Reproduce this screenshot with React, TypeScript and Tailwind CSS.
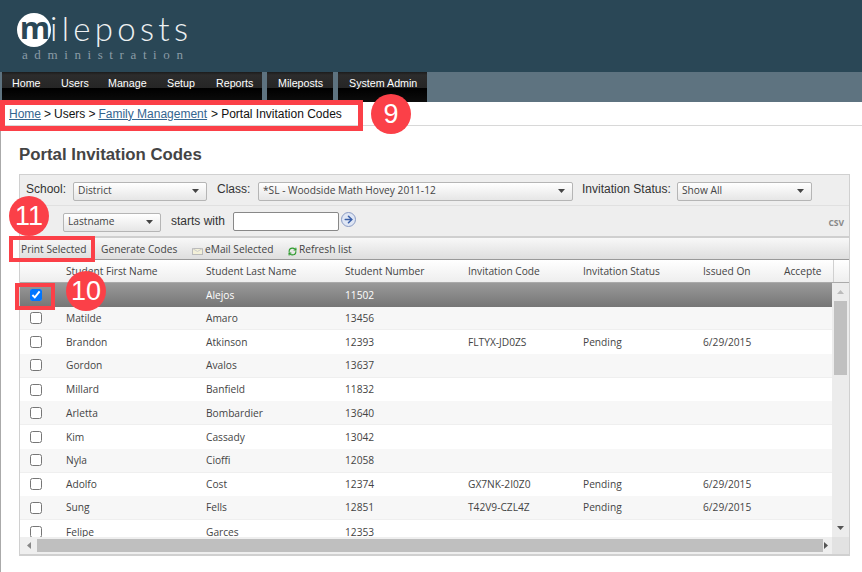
import React from 'react';
import { ArrowRight, RefreshCw } from 'lucide-react';

const students = [
  { first: '', last: 'Alejos', num: '11502', code: '', status: '', issued: '' },
  { first: 'Matilde', last: 'Amaro', num: '13456', code: '', status: '', issued: '' },
  { first: 'Brandon', last: 'Atkinson', num: '12393', code: 'FLTYX-JD0ZS', status: 'Pending', issued: '6/29/2015' },
  { first: 'Gordon', last: 'Avalos', num: '13637', code: '', status: '', issued: '' },
  { first: 'Millard', last: 'Banfield', num: '11832', code: '', status: '', issued: '' },
  { first: 'Arletta', last: 'Bombardier', num: '13640', code: '', status: '', issued: '' },
  { first: 'Kim', last: 'Cassady', num: '13042', code: '', status: '', issued: '' },
  { first: 'Nyla', last: 'Cioffi', num: '12058', code: '', status: '', issued: '' },
  { first: 'Adolfo', last: 'Cost', num: '12374', code: 'GX7NK-2I0Z0', status: 'Pending', issued: '6/29/2015' },
  { first: 'Sung', last: 'Fells', num: '12851', code: 'T42V9-CZL4Z', status: 'Pending', issued: '6/29/2015' },
  { first: 'Felipe', last: 'Garces', num: '12353', code: '', status: '', issued: '' },
];

const navBg = 'bg-[linear-gradient(#1c1c1c,#2c2c2c_10%,#262626_52%,#000_54%,#0c0c0c)]';

const Select: React.FC<{ label: string; className: string }> = ({ label, className }) => (
  <div className={`h-[19px] flex items-center justify-between pl-[4px] pr-[7px] border border-[#b5b5b5] rounded-[2px] bg-gradient-to-b from-white to-[#e6e6e6] text-[10.2px] text-[#444] font-['Open_Sans',sans-serif] ${className}`}>
    <span>{label}</span>
    <svg width="7" height="4" viewBox="0 0 7 4"><path d="M0 0h7L3.5 4z" fill="#444" /></svg>
  </div>
);

const Badge: React.FC<{ n: string; className: string }> = ({ n, className }) => (
  <div className={`absolute w-[40px] h-[40px] rounded-full bg-[#fb4048] text-white text-[27px] flex items-center justify-center ${className}`}>{n}</div>
);

export default function App() {
  return (
    <div className="relative w-[862px] h-[572px] overflow-hidden bg-white font-['Liberation_Sans',sans-serif]">
      <div className="h-[72px] bg-[#2a4756] relative">
        <div className="absolute left-[17px] top-[13px] w-[34px] h-[34px] rounded-full bg-white flex items-center justify-center">
          <span className="text-[#2a4756] text-[31px] font-bold leading-none font-['Open_Sans',sans-serif] mt-[-5px] ml-[2px]">m</span>
        </div>
        <div className="absolute left-[50px] top-[8px] text-[#eef1f2] text-[33px] leading-[40px] tracking-[4.3px] font-['Lato',sans-serif] font-light">ileposts</div>
        <div className="absolute left-[22px] top-[47px] text-[#8b9ca6] text-[13px] leading-[16px] tracking-[6.6px] font-['Liberation_Serif',serif]">administration</div>
      </div>

      <div className="h-[30px] bg-[#5e7380] flex gap-[5px] pl-[2px] text-white text-[10.7px] leading-[22px]">
        <div className={`flex items-start w-[260px] pl-[10px] ${navBg}`}>
          <span className="w-[49px]">Home</span>
          <span className="w-[47px]">Users</span>
          <span className="w-[59px]">Manage</span>
          <span className="w-[49px]">Setup</span>
          <span>Reports</span>
        </div>
        <div className={`w-[66px] pl-[11px] ${navBg}`}>Mileposts</div>
        <div className={`w-[89px] pl-[11px] ${navBg}`}>System Admin</div>
      </div>

      <div className="h-[24px] ml-[1px] pl-[8px] flex items-center border-b border-[#d8d8d8] text-[12px] text-[#111]">
        <a className="text-[#34658f] underline">Home</a>
        <span className="mx-[3px]">&gt;</span>
        <span>Users</span>
        <span className="mx-[3px]">&gt;</span>
        <a className="text-[#34658f] underline">Family Management</a>
        <span className="ml-[4px] mr-[3px]">&gt;</span>
        <span>Portal Invitation Codes</span>
      </div>

      <div className="border-l border-[#aaa] h-[446px] pl-[18px] pr-[12px]">
        <h1 className="pt-[20px] h-[48px] text-[16.8px] leading-[18px] font-bold text-[#444]">Portal Invitation Codes</h1>

        <div className="w-[831px] border border-[#d0d0d0] border-b-2 text-[10.2px] text-[#444] font-['Open_Sans',sans-serif]">
          <div className="h-[31px] bg-[#eeeeee] flex items-center pl-[6px] border-b border-[#e0e0e0] font-['Liberation_Sans',sans-serif] text-[12px] text-[#333]">
            <span className="w-[47px] mt-[-3px]">School:</span>
            <Select label="District" className="w-[134px] mt-[2px]" />
            <span className="ml-[10px] w-[41px] mt-[-3px]">Class:</span>
            <Select label="*SL - Woodside Math Hovey 2011-12" className="w-[315px] mt-[2px]" />
            <span className="ml-[9px] w-[95px] mt-[-3px]">Invitation Status:</span>
            <Select label="Show All" className="w-[135px] mt-[2px]" />
          </div>
          <div className="h-[32px] bg-[#eeeeee] flex items-center pl-[43px] pr-[5px] border-b-2 border-[#cfcfcf]">
            <Select label="Lastname" className="w-[98px] mt-[2px]" />
            <span className="ml-[10px] text-[12px] text-[#333] font-['Liberation_Sans',sans-serif]">starts with</span>
            <div className="ml-[8px] w-[106px] h-[19px] bg-white border border-[#888] rounded-[2px]" />
            <div className="ml-[2px] mb-[4px] w-[15px] h-[15px] rounded-full border border-[#8a9bc4] bg-[#dfe6f4] flex items-center justify-center">
              <ArrowRight size={11} strokeWidth={3.5} className="text-[#3a5fa8]" />
            </div>
            <span className="ml-auto text-[8.5px] font-bold text-[#888] mt-[4px]">CSV</span>
          </div>
          <div className="h-[22px] flex items-center pl-[1px] pt-[3px] bg-gradient-to-b from-[#f8f8f8] to-[#dedede] border-b border-[#999]">
            <span className="w-[80px]">Print Selected</span>
            <span className="w-[91px]">Generate Codes</span>
            <svg width="11" height="7" viewBox="0 0 11 7" className="mt-[2px] mr-[2px]"><rect x=".5" y=".5" width="10" height="6" fill="#f3f0d8" stroke="#bbb" /><path d="M.5.5 5.500 3.500l5-3" fill="none" stroke="#ccc" /></svg>
            <span className="w-[83px]">eMail Selected</span>
            <RefreshCw size={9} strokeWidth={3} className="text-[#2c9a2c] mr-[2px] mt-[2px]" />
            <span>Refresh list</span>
          </div>
          <div className="h-[23px] flex items-center bg-gradient-to-b from-white to-[#eeeeee] border-b border-[#aaa]">
            <div className="flex items-center w-[814px] h-full pt-[2px] border-r border-[#d0d0d0]">
              <span className="w-[46px] shrink-0" />
              <span className="w-[140px] shrink-0">Student First Name</span>
              <span className="w-[139px] shrink-0">Student Last Name</span>
              <span className="w-[123px] shrink-0">Student Number</span>
              <span className="w-[115px] shrink-0">Invitation Code</span>
              <span className="w-[120px] shrink-0">Invitation Status</span>
              <span className="w-[81px] shrink-0">Issued On</span>
              <span className="shrink-0">Accepte</span>
            </div>
          </div>
          <div className="flex h-[254px]">
            <div className="w-[812px] overflow-hidden">
              {students.map((s, i) => (
                <div key={s.num} className={`h-[23.7px] flex items-center ${i === 0 ? 'bg-gradient-to-b from-[#9a9a9a] to-[#767676] text-white' : i % 2 ? 'bg-[#f7f7f7] border-b border-[#efefef]' : 'bg-white'}`}>
                  <span className="w-[46px] shrink-0 pl-[10px] flex items-center">
                    <input type="checkbox" defaultChecked={i === 0} className="w-[12px] h-[12px] m-0" />
                  </span>
                  <span className="w-[140px] shrink-0 pt-[1px]">{s.first}</span>
                  <span className="w-[139px] shrink-0 pt-[1px]">{s.last}</span>
                  <span className="w-[123px] shrink-0 pt-[1px]">{s.num}</span>
                  <span className="w-[115px] shrink-0 pt-[1px]">{s.code}</span>
                  <span className="w-[120px] shrink-0 pt-[1px]">{s.status}</span>
                  <span className="shrink-0 pt-[1px]">{s.issued}</span>
                </div>
              ))}
            </div>
            <div className="w-[17px] bg-[#ececec] flex flex-col items-center">
              <svg width="7" height="4" viewBox="0 0 7 4" className="mt-[7px]"><path d="M0 4h7L3.5 0z" fill="#bbb" /></svg>
              <div className="mt-[7px] w-[13px] h-[74px] bg-[#c0c0c0]" />
              <svg width="7" height="4" viewBox="0 0 7 4" className="mt-auto mb-[7px]"><path d="M0 0h7L3.5 4z" fill="#555" /></svg>
            </div>
          </div>
          <div className="h-[17px] bg-[#efefef] flex items-center pl-[7px]">
            <svg width="4" height="7" viewBox="0 0 4 7"><path d="M4 0v7L0 3.500z" fill="#888" /></svg>
            <div className="ml-[6px] w-[786px] h-[13px] bg-[#bfbfbf]" />
            <svg width="4" height="7" viewBox="0 0 4 7" className="ml-[1px]"><path d="M0 0v7l4-3.500z" fill="#555" /></svg>
            <div className="ml-auto w-[17px] h-full bg-[#e2e2e2]" />
          </div>
        </div>
      </div>

      <div className="absolute left-0 top-[100px] w-[363px] h-[31px] border-[5px] border-[#fb4048]" />
      <div className="absolute left-[9px] top-[236px] w-[86px] h-[26px] border-[4px] border-[#fb4048]" />
      <div className="absolute left-[15px] top-[283px] w-[40px] h-[27px] border-[4px] border-[#fb4048]" />
      <Badge n="9" className="left-[371px] top-[94px]" />
      <Badge n="11" className="left-[9px] top-[196px]" />
      <Badge n="10" className="left-[66px] top-[271px]" />
    </div>
  );
}
